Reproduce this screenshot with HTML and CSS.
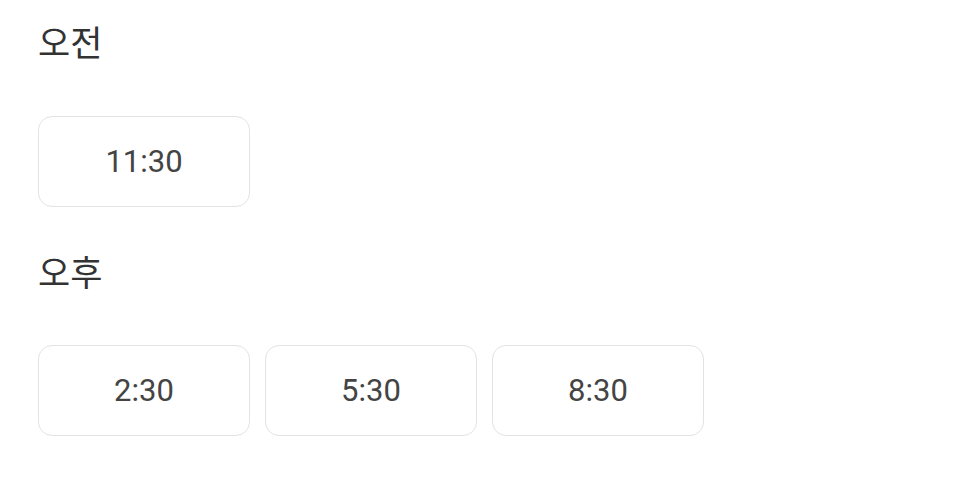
FILE: index.html
```html
<!DOCTYPE html>
<html>
<head>
<meta charset="utf-8">
<title>시간 선택</title>
<link rel="stylesheet" href="styles.css">
</head>
<body>
    <div class="section">
        <h2 class="period">오전</h2>
        <div class="slots">
            <button class="slot">11:30</button>
        </div>
    </div>
    <div class="section">
        <h2 class="period">오후</h2>
        <div class="slots">
            <button class="slot">2:30</button>
            <button class="slot">5:30</button>
            <button class="slot">8:30</button>
        </div>
    </div>
</body>
</html>
```
FILE: styles.css
```css
html {
    font-family: Roboto, "Noto Sans CJK KR", sans-serif;
    background: #fff;
}
body {
    margin: 0;
    padding: 21px 38px;
}

.section {
    margin-bottom: 44px;
}

.period {
    margin: 0 0 47px;
    font-size: 35px;
    line-height: 48px;
    font-weight: normal;
    color: #333;
}

.slots {
    display: flex;
    gap: 15px;
}

.slot {
    width: 212px;
    height: 91px;
    box-sizing: border-box;
    background: #fff;
    border: 1.5px solid #e3e3e3;
    border-radius: 14px;
    font-family: Roboto, sans-serif;
    font-size: 31px;
    color: #444;
    padding: 0;
}

.section + .section .slots {
    margin-top: -1px;
}
```
